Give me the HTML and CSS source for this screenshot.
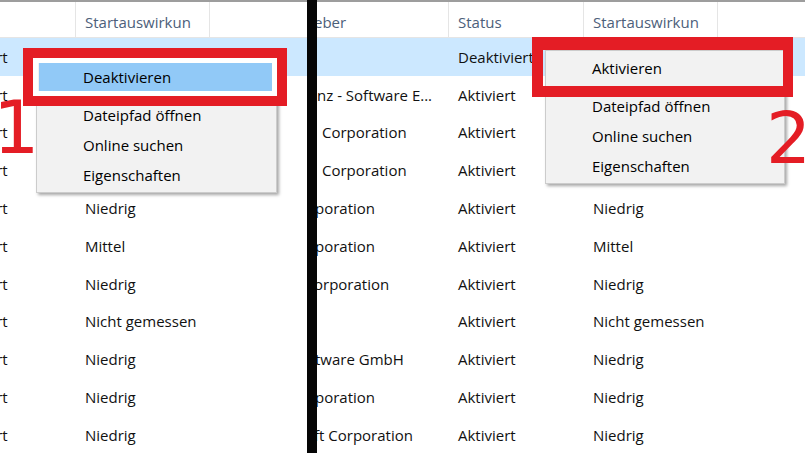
FILE: index.html
```html
<!DOCTYPE html>
<html lang="de">
<head>
<meta charset="utf-8">
<title>Autostart</title>
<link rel="stylesheet" href="styles.css">
</head>
<body>
<div class="shot">
  <section class="panel panel-left">
    <div class="grid">
      <div class="row head"><div class="cell">Status</div><div class="cell">Startauswirkun</div><div class="cell"></div></div>
      <div class="row sel"><div class="cell">Aktiviert</div><div class="cell"></div><div class="cell"></div></div>
      <div class="row"><div class="cell">Aktiviert</div><div class="cell"></div><div class="cell"></div></div>
      <div class="row"><div class="cell">Aktiviert</div><div class="cell"></div><div class="cell"></div></div>
      <div class="row"><div class="cell">Aktiviert</div><div class="cell"></div><div class="cell"></div></div>
      <div class="row"><div class="cell">Aktiviert</div><div class="cell">Niedrig</div><div class="cell"></div></div>
      <div class="row"><div class="cell">Aktiviert</div><div class="cell">Mittel</div><div class="cell"></div></div>
      <div class="row"><div class="cell">Aktiviert</div><div class="cell">Niedrig</div><div class="cell"></div></div>
      <div class="row"><div class="cell">Aktiviert</div><div class="cell">Nicht gemessen</div><div class="cell"></div></div>
      <div class="row"><div class="cell">Aktiviert</div><div class="cell">Niedrig</div><div class="cell"></div></div>
      <div class="row"><div class="cell">Aktiviert</div><div class="cell">Niedrig</div><div class="cell"></div></div>
      <div class="row"><div class="cell">Aktiviert</div><div class="cell">Niedrig</div><div class="cell"></div></div>
    </div>
  </section>
  <div class="divider"></div>
  <section class="panel panel-right">
    <div class="grid">
      <div class="row head"><div class="cell pub cut3">eber</div><div class="cell">Status</div><div class="cell">Startauswirkun</div><div class="cell"></div></div>
      <div class="row sel"><div class="cell pub"></div><div class="cell">Deaktiviert</div><div class="cell"></div><div class="cell"></div></div>
      <div class="row"><div class="cell pub">nz - Software E...</div><div class="cell">Aktiviert</div><div class="cell"></div><div class="cell"></div></div>
      <div class="row"><div class="cell pub pad5">Corporation</div><div class="cell">Aktiviert</div><div class="cell"></div><div class="cell"></div></div>
      <div class="row"><div class="cell pub pad5">Corporation</div><div class="cell">Aktiviert</div><div class="cell"></div><div class="cell"></div></div>
      <div class="row"><div class="cell pub cut2">poration</div><div class="cell">Aktiviert</div><div class="cell">Niedrig</div><div class="cell"></div></div>
      <div class="row"><div class="cell pub cut2">poration</div><div class="cell">Aktiviert</div><div class="cell">Mittel</div><div class="cell"></div></div>
      <div class="row"><div class="cell pub cut3">orporation</div><div class="cell">Aktiviert</div><div class="cell">Niedrig</div><div class="cell"></div></div>
      <div class="row"><div class="cell pub"></div><div class="cell">Aktiviert</div><div class="cell">Nicht gemessen</div><div class="cell"></div></div>
      <div class="row"><div class="cell pub cut2">tware GmbH</div><div class="cell">Aktiviert</div><div class="cell">Niedrig</div><div class="cell"></div></div>
      <div class="row"><div class="cell pub cut2">poration</div><div class="cell">Aktiviert</div><div class="cell">Niedrig</div><div class="cell"></div></div>
      <div class="row"><div class="cell pub cut3">ft Corporation</div><div class="cell">Aktiviert</div><div class="cell">Niedrig</div><div class="cell"></div></div>
    </div>
  </section>

  <div class="menu menu-left">
    <div class="mi hot">Deaktivieren</div>
    <div class="sep"></div>
    <div class="mi">Dateipfad öffnen</div>
    <div class="mi">Online suchen</div>
    <div class="mi">Eigenschaften</div>
  </div>
  <div class="mark mark-left"></div>
  <div class="num num1">1</div>

  <div class="menu menu-right">
    <div class="mi">Aktivieren</div>
    <div class="sep"></div>
    <div class="mi">Dateipfad öffnen</div>
    <div class="mi">Online suchen</div>
    <div class="mi">Eigenschaften</div>
  </div>
  <div class="mark mark-right"></div>
  <div class="num num2">2</div>
</div>
</body>
</html>
```

FILE: styles.css
```css
* { box-sizing: border-box; }
html, body { margin: 0; padding: 0; background: #fff; }
body {
  font-family: "Open Sans", "Noto Sans", sans-serif;
  font-size: 15px;
  color: #111;
}
.shot {
  position: relative;
  width: 805px;
  height: 453px;
  display: flex;
  overflow: hidden;
  background: #fff;
}
.panel {
  flex: none;
  overflow: hidden;
  border-top: 2px solid #9d9d9d;
}
.panel-left { width: 307px; }
.panel-right { flex: 1; }
.divider { flex: none; width: 10px; background: #050505; }
.panel-left .grid { margin-left: -59px; }

.row {
  display: grid;
  height: 37.8px;
  align-items: center;
  white-space: nowrap;
}
.panel-left .row { grid-template-columns: 135px 134px 135px; }
.panel-right .row { grid-template-columns: 132px 135px 134px 135px; }

.head {
  height: 36px;
  border-bottom: 1px solid #e5e5e5;
  align-items: stretch;
  color: #4c607a;
}
.head .cell {
  border-right: 1px solid #e5e5e5;
  padding-top: 10px;
  line-height: 20px;
}
.cell { padding-left: 9px; overflow: hidden; }
.pub { padding-left: 0; }
.pad5 { padding-left: 5px; }
.cut2 { text-indent: -2px; }
.cut3 { text-indent: -3px; }
.sel { background: #cce8ff; }

.menu {
  position: absolute;
  background: #f2f2f2;
  border: 1px solid #cccccc;
  padding: 2px 0;
  box-shadow: 2px 2px 3px rgba(0, 0, 0, 0.35);
  color: #000;
  white-space: nowrap;
}
.menu-left { left: 36px; top: 59px; width: 241px; }
.menu-right { left: 545px; top: 50px; width: 240px; }
.mi {
  height: 30px;
  line-height: 30px;
  margin: 0 2px;
  padding-left: 44px;
}
.hot { background: #91c9f7; }
.sep { height: 8px; display: flex; align-items: center; padding-left: 30px; margin-right: 2px; }
.sep::after { content: ""; flex: 1; height: 1px; background: #d7d7d7; }

.mark {
  position: absolute;
  border: 10px solid #e41d25;
}
.mark-left {
  left: 23px; top: 48px; width: 264px; height: 58px;
  box-shadow: inset 0 0 0 5px #fff;
}
.mark-right {
  left: 532px; top: 37px; width: 261px; height: 60px;
  border-width: 13px 10px 11px 11px;
}

.num {
  position: absolute;
  font-family: "DejaVu Sans", sans-serif;
  color: #e41d25;
  line-height: 1;
}
.num1 { left: -7px; top: 91px; font-size: 73px; }
.num2 { left: 766px; top: 103px; font-size: 71px; }
```
